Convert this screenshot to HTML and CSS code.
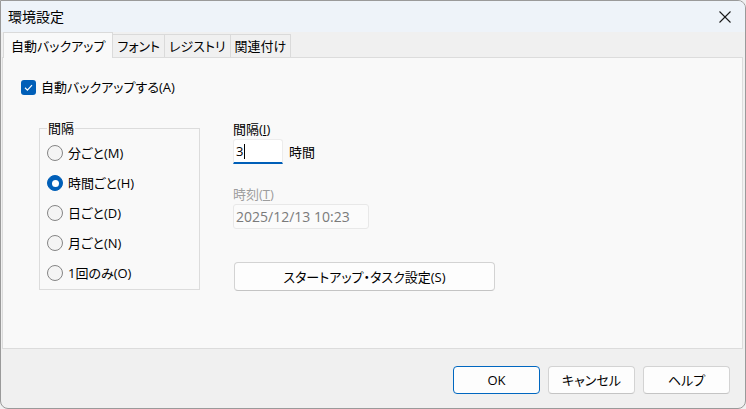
FILE: index.html
```html
<!DOCTYPE html>
<html lang="ja">
<head>
  <meta charset="UTF-8">
  <meta name="viewport" content="width=device-width, initial-scale=1.0">
  <title>環境設定</title>
  <link rel="stylesheet" href="styles.css">
</head>
<body>
  <div class="dialog">
    <div class="titlebar">
      <span class="title">環境設定</span>
      <svg class="close-icon" viewBox="0 0 12 12">
        <line x1="0.5" y1="0.5" x2="11.5" y2="11.5"></line>
        <line x1="11.5" y1="0.5" x2="0.5" y2="11.5"></line>
      </svg>
    </div>

    <div class="tabs">
      <div class="tab active">自動バックアップ</div>
      <div class="tab">フォント</div>
      <div class="tab">レジストリ</div>
      <div class="tab">関連付け</div>
    </div>

    <div class="panel">
      <div class="check-row">
        <span class="checkbox">
          <svg viewBox="0 0 15 15">
            <path d="M4 7.8l2.4 2.3L11 5.2"></path>
          </svg>
        </span>
        <span>自動バックアップする(A)</span>
      </div>

      <div class="options">
        <fieldset class="group">
          <legend>間隔</legend>
          <div class="radio-row"><span class="radio"></span><span>分ごと(M)</span></div>
          <div class="radio-row"><span class="radio checked"></span><span>時間ごと(H)</span></div>
          <div class="radio-row"><span class="radio"></span><span>日ごと(D)</span></div>
          <div class="radio-row"><span class="radio"></span><span>月ごと(N)</span></div>
          <div class="radio-row"><span class="radio"></span><span>1回のみ(O)</span></div>
        </fieldset>

        <div class="side">
          <div class="field-label">間隔(<u>I</u>)</div>
          <div class="interval-row">
            <div class="input focused">3<span class="caret"></span></div>
            <span>時間</span>
          </div>
          <div class="field-label disabled">時刻(<u>T</u>)</div>
          <div class="input disabled-input">2025/12/13 10:23</div>
          <button class="btn wide">スタートアップ・タスク設定(S)</button>
        </div>
      </div>
    </div>

    <div class="footer">
      <button class="btn default">OK</button>
      <button class="btn">キャンセル</button>
      <button class="btn">ヘルプ</button>
    </div>
  </div>
</body>
</html>
```

FILE: styles.css
```css
body {
  margin: 0;
  font-family: "Open Sans", "Noto Sans CJK JP", sans-serif;
  font-size: 13px;
  line-height: 16px;
  font-feature-settings: "palt";
  color: #000;
  background: #f0f0f0;
}

.dialog {
  width: 746px;
  height: 409px;
  box-sizing: border-box;
  border: 1px solid #9a9a9a;
  border-radius: 0 8px 8px 8px;
  overflow: hidden;
  display: flex;
  flex-direction: column;
  background: #f0f0f0;
}

.titlebar {
  height: 31px;
  flex: none;
  display: flex;
  align-items: center;
  justify-content: space-between;
  padding: 0 14px 0 7px;
  background: #eef3f9;
}

.title {
  font-size: 14px;
}

.close-icon {
  width: 12px;
  height: 12px;
  stroke: #1a1a1a;
  stroke-width: 1.1;
  fill: none;
}

.tabs {
  height: 25px;
  flex: none;
  display: flex;
  align-items: flex-end;
  padding-left: 3px;
}

.tab {
  height: 23px;
  box-sizing: border-box;
  padding: 0 4px;
  display: flex;
  align-items: center;
  border: 1px solid #dadada;
  border-bottom: none;
  margin-left: -1px;
  background: #f0f0f0;
}

.tab.active {
  height: 26px;
  padding: 0 7px;
  margin-bottom: -1px;
  position: relative;
  z-index: 1;
  background: #f9f9f9;
}

.panel {
  flex: 1;
  margin: 0 2px 0 1px;
  border: 1px solid #dcdcdc;
  background: #f9f9f9;
  padding: 21px 0 0 18px;
}

.check-row {
  display: flex;
  align-items: center;
  gap: 5px;
  height: 16px;
}

.checkbox {
  width: 15px;
  height: 15px;
  border-radius: 3px;
  background: #005fb8;
  display: flex;
}

.checkbox svg {
  width: 15px;
  height: 15px;
  stroke: #fff;
  stroke-width: 1.2;
  fill: none;
}

.options {
  display: flex;
  align-items: flex-start;
  gap: 33px;
  margin: 25px 0 0 18px;
}

.group {
  margin: 0;
  width: 161px;
  box-sizing: border-box;
  border: 1px solid #dcdcdc;
  padding: 2px 0 1px 7px;
}

.group legend {
  padding: 0 1px;
  line-height: 16px;
}

.radio-row {
  height: 30px;
  display: flex;
  align-items: center;
  gap: 5px;
}

.radio {
  width: 16px;
  height: 16px;
  box-sizing: border-box;
  border: 1px solid #858585;
  border-radius: 50%;
  background: #f4f4f4;
  display: flex;
  align-items: center;
  justify-content: center;
}

.radio.checked {
  border-color: #005fb8;
  background: #005fb8;
}

.radio.checked::after {
  content: '';
  width: 7px;
  height: 7px;
  border-radius: 50%;
  background: #fff;
}

.side {
  display: flex;
  flex-direction: column;
  align-items: flex-start;
  padding-top: 1px;
}

.field-label.disabled {
  color: #9d9d9d;
  margin-top: 22px;
}

.interval-row {
  display: flex;
  align-items: center;
  gap: 6px;
  margin-top: 2px;
}

.input {
  height: 25px;
  box-sizing: border-box;
  display: flex;
  align-items: center;
  padding: 0 2px;
  border-radius: 3px;
}

.input.focused {
  width: 50px;
  background: #fff;
  border: 1px solid #ececec;
  border-bottom: 2px solid #005fb8;
  border-radius: 3px 3px 0 0;
}

.caret {
  width: 1px;
  height: 15px;
  background: #000;
  margin-left: 1px;
}

.disabled-input {
  width: 136px;
  margin-top: 2px;
  background: #fbfbfb;
  border: 1px solid #e8e8e8;
  color: #7a7a7a;
  font-size: 14px;
}

.btn {
  font: inherit;
  font-feature-settings: "palt";
  color: #000;
  width: 87px;
  height: 28px;
  padding: 0;
  background: #fdfdfd;
  border: 1px solid #d3d3d3;
  border-bottom-color: #c4c4c4;
  border-radius: 4px;
}

.btn.wide {
  width: 261px;
  height: 29px;
  margin: 33px 0 0 1px;
}

.btn.default {
  border-color: #0067c0;
}

.footer {
  height: 59px;
  flex: none;
  box-sizing: border-box;
  display: flex;
  justify-content: flex-end;
  align-items: flex-start;
  gap: 8px;
  padding: 17px 15px 0 0;
}
```
